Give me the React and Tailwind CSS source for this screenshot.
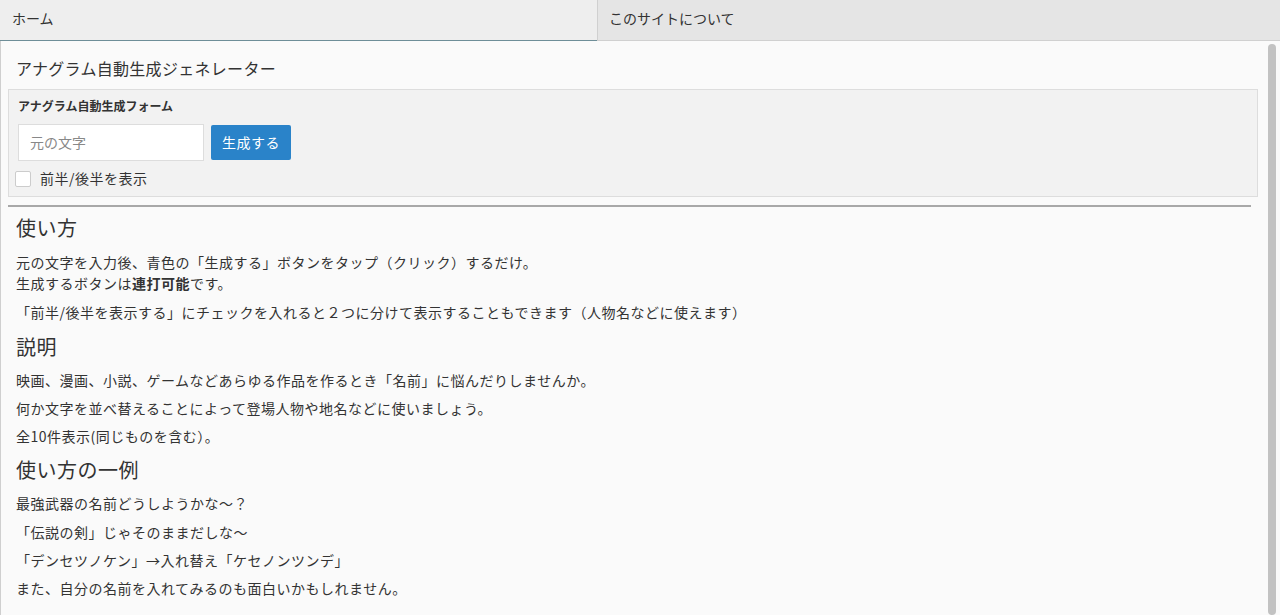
export default function App() {
  return (
    <div
      className="h-[615px] overflow-hidden bg-[#fafafa] text-[#333]"
      style={{ fontFamily: '"Noto Sans CJK JP", "Noto Sans", sans-serif' }}
    >
      <div className="flex h-[41px] text-[14px]">
        <div className="w-[597px] bg-[#eeeeee] border-b border-[#6e8e98] pl-[12px] pt-[8px]">ホーム</div>
        <div className="flex-1 bg-[#e5e5e5] border-b border-l border-[#d0d0d0] pl-[11px] pt-[8px]">このサイトについて</div>
      </div>

      <div className="flex h-[574px]">
        <div className="flex-1 border-l border-[#cfcfcf] pl-[7px] pr-[8px]">
          <h1 className="text-[16px] leading-[24px] pt-[15px] pl-[8px] tracking-[0.3px]">アナグラム自動生成ジェネレーター</h1>

          <div className="mt-[9px] border border-[#dddddd] bg-[#f2f2f2] pl-[9px] pt-[7px] h-[108px]">
            <div className="text-[12px] leading-[18px] font-bold">アナグラム自動生成フォーム</div>
            <div className="flex items-center gap-[7px] mt-[9px]">
              <div className="w-[186px] h-[37px] bg-white border border-[#dddddd] pl-[11px] flex items-center text-[14px] text-[#888]">
                元の文字
              </div>
              <button className="w-[80px] h-[35px] bg-[#2a83c9] text-white text-[14px] rounded-[2px] tracking-[0.5px]">生成する</button>
            </div>
            <label className="flex items-center mt-[7px] -ml-[3px] text-[14px] tracking-[0.5px]">
              <span className="w-[16px] h-[16px] bg-white border border-[#cccccc] rounded-[2px]"></span>
              <span className="ml-[9px]">前半/後半を表示</span>
            </label>
          </div>

          <div className="mt-[8px] mr-[7px] h-[2px] bg-[#a8a8a8]"></div>

          <div className="pl-[8px] tracking-[0.5px]">
            <h2 className="text-[20px] leading-[28px] mt-[7px]">使い方</h2>
            <p className="text-[14px] leading-[21px] mt-[10px]">
              元の文字を入力後、青色の「生成する」ボタンをタップ（クリック）するだけ。<br />
              生成するボタンは<b>連打可能</b>です。
            </p>
            <p className="text-[14px] leading-[21px] mt-[8px]">「前半/後半を表示する」にチェックを入れると２つに分けて表示することもできます（人物名などに使えます）</p>

            <h2 className="text-[20px] leading-[28px] mt-[10px]">説明</h2>
            <p className="text-[14px] leading-[21px] mt-[9px]">映画、漫画、小説、ゲームなどあらゆる作品を作るとき「名前」に悩んだりしませんか。</p>
            <p className="text-[14px] leading-[21px] mt-[7px]">何か文字を並べ替えることによって登場人物や地名などに使いましょう。</p>
            <p className="text-[14px] leading-[21px] mt-[7px]">全10件表示(同じものを含む）。</p>

            <h2 className="text-[20px] leading-[28px] mt-[9px]">使い方の一例</h2>
            <p className="text-[14px] leading-[21px] mt-[9px]">最強武器の名前どうしようかな〜？</p>
            <p className="text-[14px] leading-[21px] mt-[8px]">「伝説の剣」じゃそのままだしな〜</p>
            <p className="text-[14px] leading-[21px] mt-[7px]">「デンセツノケン」→入れ替え「ケセノンツンデ」</p>
            <p className="text-[14px] leading-[21px] mt-[7px]">また、自分の名前を入れてみるのも面白いかもしれません。</p>
          </div>
        </div>
        <div className="w-[14px] pt-[3px] pl-[2px]">
          <div className="w-[8px] h-full bg-[#c2c2c2] rounded-full"></div>
        </div>
      </div>
    </div>
  );
}
